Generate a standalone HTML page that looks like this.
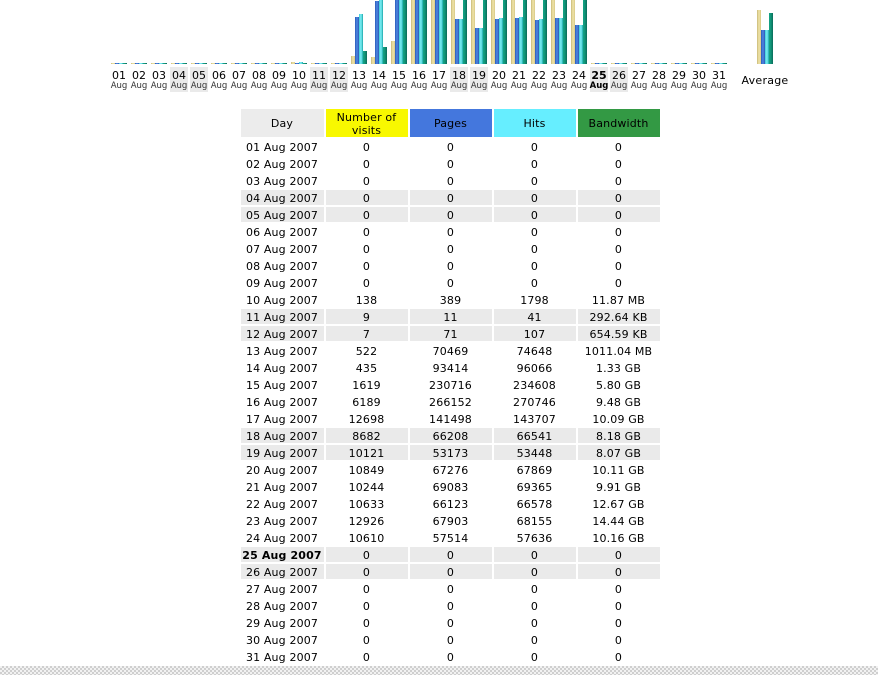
<!DOCTYPE html>
<html><head><meta charset="utf-8"><title>Days of month</title>
<style>
html,body{margin:0;padding:0;background:#fff;width:878px;height:675px;overflow:hidden}
body{font-family:"DejaVu Sans","Liberation Sans",sans-serif;color:#000;position:relative}
.y,.b,.c,.g{position:absolute;width:4px;bottom:0}
.y{background:linear-gradient(90deg,#c9b978,#f0e4a8 50%,#d8c987)}
.b{background:linear-gradient(90deg,#2a5cb8,#4f86e4 50%,#2a58b0)}
.c{background:linear-gradient(90deg,#3ecbd8,#7ef0f6 50%,#18a5a8)}
.g{background:linear-gradient(90deg,#16a585,#0f9276 50%,#0b6a58)}
#chart{position:absolute;left:0;top:0;width:878px;height:64px;overflow:hidden}
.d{position:absolute;top:0;height:64px;width:16px}
.l{position:absolute;top:67px;width:18px;height:25px;text-align:center;font-size:11px;line-height:18px;white-space:nowrap;color:#000}
.l small{display:block;font-size:8.5px;line-height:9px;margin-top:-3px;color:#333;margin-left:-2px;margin-right:-2px}
.l.w{background:#eaeaea}
.l.t{font-weight:bold}
.l.t small{font-weight:bold;color:#000}
#avg{position:absolute;left:730px;top:74px;width:70px;text-align:center;font-size:11px;line-height:14px;letter-spacing:.25px}
table{position:absolute;left:239px;top:107px;border-collapse:separate;border-spacing:2px;table-layout:fixed;width:423px;font-size:11px;letter-spacing:.15px}
th,td{text-align:center;font-weight:normal;white-space:nowrap;overflow:visible;line-height:12px}
th{padding:1px 1px 0 0;height:27px;color:#000;line-height:13px}
td{padding:3px 1px 0 0;height:12px}
tr.w td{background:#eaeaea}
#foot{position:absolute;left:0;top:666px;width:878px;height:9px;background-color:#f2f2f2;background-image:conic-gradient(#cfcfcf 25%,#f2f2f2 0 50%,#cfcfcf 0 75%,#f2f2f2 0);background-size:4px 4px}
</style></head><body>
<div id="chart">
<div class="d" style="left:111px"><i class="y" style="left:0;height:1px"></i><i class="b" style="left:4px;height:1px"></i><i class="c" style="left:8px;height:1px"></i><i class="g" style="left:12px;height:1px"></i></div>
<div class="d" style="left:131px"><i class="y" style="left:0;height:1px"></i><i class="b" style="left:4px;height:1px"></i><i class="c" style="left:8px;height:1px"></i><i class="g" style="left:12px;height:1px"></i></div>
<div class="d" style="left:151px"><i class="y" style="left:0;height:1px"></i><i class="b" style="left:4px;height:1px"></i><i class="c" style="left:8px;height:1px"></i><i class="g" style="left:12px;height:1px"></i></div>
<div class="d" style="left:171px"><i class="y" style="left:0;height:1px"></i><i class="b" style="left:4px;height:1px"></i><i class="c" style="left:8px;height:1px"></i><i class="g" style="left:12px;height:1px"></i></div>
<div class="d" style="left:191px"><i class="y" style="left:0;height:1px"></i><i class="b" style="left:4px;height:1px"></i><i class="c" style="left:8px;height:1px"></i><i class="g" style="left:12px;height:1px"></i></div>
<div class="d" style="left:211px"><i class="y" style="left:0;height:1px"></i><i class="b" style="left:4px;height:1px"></i><i class="c" style="left:8px;height:1px"></i><i class="g" style="left:12px;height:1px"></i></div>
<div class="d" style="left:231px"><i class="y" style="left:0;height:1px"></i><i class="b" style="left:4px;height:1px"></i><i class="c" style="left:8px;height:1px"></i><i class="g" style="left:12px;height:1px"></i></div>
<div class="d" style="left:251px"><i class="y" style="left:0;height:1px"></i><i class="b" style="left:4px;height:1px"></i><i class="c" style="left:8px;height:1px"></i><i class="g" style="left:12px;height:1px"></i></div>
<div class="d" style="left:271px"><i class="y" style="left:0;height:1px"></i><i class="b" style="left:4px;height:1px"></i><i class="c" style="left:8px;height:1px"></i><i class="g" style="left:12px;height:1px"></i></div>
<div class="d" style="left:291px"><i class="y" style="left:0;height:2px"></i><i class="b" style="left:4px;height:1px"></i><i class="c" style="left:8px;height:2px"></i><i class="g" style="left:12px;height:1px"></i></div>
<div class="d" style="left:311px"><i class="y" style="left:0;height:1px"></i><i class="b" style="left:4px;height:1px"></i><i class="c" style="left:8px;height:1px"></i><i class="g" style="left:12px;height:1px"></i></div>
<div class="d" style="left:331px"><i class="y" style="left:0;height:1px"></i><i class="b" style="left:4px;height:1px"></i><i class="c" style="left:8px;height:1px"></i><i class="g" style="left:12px;height:1px"></i></div>
<div class="d" style="left:351px"><i class="y" style="left:0;height:8px"></i><i class="b" style="left:4px;height:47px"></i><i class="c" style="left:8px;height:50px"></i><i class="g" style="left:12px;height:13px"></i></div>
<div class="d" style="left:371px"><i class="y" style="left:0;height:7px"></i><i class="b" style="left:4px;height:63px"></i><i class="c" style="left:8px;height:64px"></i><i class="g" style="left:12px;height:17px"></i></div>
<div class="d" style="left:391px"><i class="y" style="left:0;height:23px"></i><i class="b" style="left:4px;height:64px"></i><i class="c" style="left:8px;height:64px"></i><i class="g" style="left:12px;height:64px"></i></div>
<div class="d" style="left:411px"><i class="y" style="left:0;height:64px"></i><i class="b" style="left:4px;height:64px"></i><i class="c" style="left:8px;height:64px"></i><i class="g" style="left:12px;height:64px"></i></div>
<div class="d" style="left:431px"><i class="y" style="left:0;height:64px"></i><i class="b" style="left:4px;height:64px"></i><i class="c" style="left:8px;height:64px"></i><i class="g" style="left:12px;height:64px"></i></div>
<div class="d" style="left:451px"><i class="y" style="left:0;height:64px"></i><i class="b" style="left:4px;height:45px"></i><i class="c" style="left:8px;height:45px"></i><i class="g" style="left:12px;height:64px"></i></div>
<div class="d" style="left:471px"><i class="y" style="left:0;height:64px"></i><i class="b" style="left:4px;height:36px"></i><i class="c" style="left:8px;height:36px"></i><i class="g" style="left:12px;height:64px"></i></div>
<div class="d" style="left:491px"><i class="y" style="left:0;height:64px"></i><i class="b" style="left:4px;height:45px"></i><i class="c" style="left:8px;height:46px"></i><i class="g" style="left:12px;height:64px"></i></div>
<div class="d" style="left:511px"><i class="y" style="left:0;height:64px"></i><i class="b" style="left:4px;height:46px"></i><i class="c" style="left:8px;height:47px"></i><i class="g" style="left:12px;height:64px"></i></div>
<div class="d" style="left:531px"><i class="y" style="left:0;height:64px"></i><i class="b" style="left:4px;height:44px"></i><i class="c" style="left:8px;height:45px"></i><i class="g" style="left:12px;height:64px"></i></div>
<div class="d" style="left:551px"><i class="y" style="left:0;height:64px"></i><i class="b" style="left:4px;height:46px"></i><i class="c" style="left:8px;height:46px"></i><i class="g" style="left:12px;height:64px"></i></div>
<div class="d" style="left:571px"><i class="y" style="left:0;height:64px"></i><i class="b" style="left:4px;height:39px"></i><i class="c" style="left:8px;height:39px"></i><i class="g" style="left:12px;height:64px"></i></div>
<div class="d" style="left:591px"><i class="y" style="left:0;height:1px"></i><i class="b" style="left:4px;height:1px"></i><i class="c" style="left:8px;height:1px"></i><i class="g" style="left:12px;height:1px"></i></div>
<div class="d" style="left:611px"><i class="y" style="left:0;height:1px"></i><i class="b" style="left:4px;height:1px"></i><i class="c" style="left:8px;height:1px"></i><i class="g" style="left:12px;height:1px"></i></div>
<div class="d" style="left:631px"><i class="y" style="left:0;height:1px"></i><i class="b" style="left:4px;height:1px"></i><i class="c" style="left:8px;height:1px"></i><i class="g" style="left:12px;height:1px"></i></div>
<div class="d" style="left:651px"><i class="y" style="left:0;height:1px"></i><i class="b" style="left:4px;height:1px"></i><i class="c" style="left:8px;height:1px"></i><i class="g" style="left:12px;height:1px"></i></div>
<div class="d" style="left:671px"><i class="y" style="left:0;height:1px"></i><i class="b" style="left:4px;height:1px"></i><i class="c" style="left:8px;height:1px"></i><i class="g" style="left:12px;height:1px"></i></div>
<div class="d" style="left:691px"><i class="y" style="left:0;height:1px"></i><i class="b" style="left:4px;height:1px"></i><i class="c" style="left:8px;height:1px"></i><i class="g" style="left:12px;height:1px"></i></div>
<div class="d" style="left:711px"><i class="y" style="left:0;height:1px"></i><i class="b" style="left:4px;height:1px"></i><i class="c" style="left:8px;height:1px"></i><i class="g" style="left:12px;height:1px"></i></div>
<div class="d" style="left:757px"><i class="y" style="left:0;height:54px"></i><i class="b" style="left:4px;height:34px"></i><i class="c" style="left:8px;height:34px"></i><i class="g" style="left:12px;height:51px"></i></div>
</div>
<div class="l" style="left:110px">01<small>Aug</small></div>
<div class="l" style="left:130px">02<small>Aug</small></div>
<div class="l" style="left:150px">03<small>Aug</small></div>
<div class="l w" style="left:170px">04<small>Aug</small></div>
<div class="l w" style="left:190px">05<small>Aug</small></div>
<div class="l" style="left:210px">06<small>Aug</small></div>
<div class="l" style="left:230px">07<small>Aug</small></div>
<div class="l" style="left:250px">08<small>Aug</small></div>
<div class="l" style="left:270px">09<small>Aug</small></div>
<div class="l" style="left:290px">10<small>Aug</small></div>
<div class="l w" style="left:310px">11<small>Aug</small></div>
<div class="l w" style="left:330px">12<small>Aug</small></div>
<div class="l" style="left:350px">13<small>Aug</small></div>
<div class="l" style="left:370px">14<small>Aug</small></div>
<div class="l" style="left:390px">15<small>Aug</small></div>
<div class="l" style="left:410px">16<small>Aug</small></div>
<div class="l" style="left:430px">17<small>Aug</small></div>
<div class="l w" style="left:450px">18<small>Aug</small></div>
<div class="l w" style="left:470px">19<small>Aug</small></div>
<div class="l" style="left:490px">20<small>Aug</small></div>
<div class="l" style="left:510px">21<small>Aug</small></div>
<div class="l" style="left:530px">22<small>Aug</small></div>
<div class="l" style="left:550px">23<small>Aug</small></div>
<div class="l" style="left:570px">24<small>Aug</small></div>
<div class="l w t" style="left:590px">25<small>Aug</small></div>
<div class="l w" style="left:610px">26<small>Aug</small></div>
<div class="l" style="left:630px">27<small>Aug</small></div>
<div class="l" style="left:650px">28<small>Aug</small></div>
<div class="l" style="left:670px">29<small>Aug</small></div>
<div class="l" style="left:690px">30<small>Aug</small></div>
<div class="l" style="left:710px">31<small>Aug</small></div>
<div id="avg">Average</div>
<table>
<colgroup><col style="width:83px"><col style="width:82px"><col style="width:82px"><col style="width:82px"><col style="width:82px"></colgroup>
<tr><th style="background:#ececec">Day</th><th style="background:#f8f800">Number of<br>visits</th><th style="background:#4477dd">Pages</th><th style="background:#66eeff">Hits</th><th style="background:#339944">Bandwidth</th></tr>
<tr><td>01 Aug 2007</td><td>0</td><td>0</td><td>0</td><td>0</td></tr>
<tr><td>02 Aug 2007</td><td>0</td><td>0</td><td>0</td><td>0</td></tr>
<tr><td>03 Aug 2007</td><td>0</td><td>0</td><td>0</td><td>0</td></tr>
<tr class="w"><td>04 Aug 2007</td><td>0</td><td>0</td><td>0</td><td>0</td></tr>
<tr class="w"><td>05 Aug 2007</td><td>0</td><td>0</td><td>0</td><td>0</td></tr>
<tr><td>06 Aug 2007</td><td>0</td><td>0</td><td>0</td><td>0</td></tr>
<tr><td>07 Aug 2007</td><td>0</td><td>0</td><td>0</td><td>0</td></tr>
<tr><td>08 Aug 2007</td><td>0</td><td>0</td><td>0</td><td>0</td></tr>
<tr><td>09 Aug 2007</td><td>0</td><td>0</td><td>0</td><td>0</td></tr>
<tr><td>10 Aug 2007</td><td>138</td><td>389</td><td>1798</td><td>11.87 MB</td></tr>
<tr class="w"><td>11 Aug 2007</td><td>9</td><td>11</td><td>41</td><td>292.64 KB</td></tr>
<tr class="w"><td>12 Aug 2007</td><td>7</td><td>71</td><td>107</td><td>654.59 KB</td></tr>
<tr><td>13 Aug 2007</td><td>522</td><td>70469</td><td>74648</td><td>1011.04 MB</td></tr>
<tr><td>14 Aug 2007</td><td>435</td><td>93414</td><td>96066</td><td>1.33 GB</td></tr>
<tr><td>15 Aug 2007</td><td>1619</td><td>230716</td><td>234608</td><td>5.80 GB</td></tr>
<tr><td>16 Aug 2007</td><td>6189</td><td>266152</td><td>270746</td><td>9.48 GB</td></tr>
<tr><td>17 Aug 2007</td><td>12698</td><td>141498</td><td>143707</td><td>10.09 GB</td></tr>
<tr class="w"><td>18 Aug 2007</td><td>8682</td><td>66208</td><td>66541</td><td>8.18 GB</td></tr>
<tr class="w"><td>19 Aug 2007</td><td>10121</td><td>53173</td><td>53448</td><td>8.07 GB</td></tr>
<tr><td>20 Aug 2007</td><td>10849</td><td>67276</td><td>67869</td><td>10.11 GB</td></tr>
<tr><td>21 Aug 2007</td><td>10244</td><td>69083</td><td>69365</td><td>9.91 GB</td></tr>
<tr><td>22 Aug 2007</td><td>10633</td><td>66123</td><td>66578</td><td>12.67 GB</td></tr>
<tr><td>23 Aug 2007</td><td>12926</td><td>67903</td><td>68155</td><td>14.44 GB</td></tr>
<tr><td>24 Aug 2007</td><td>10610</td><td>57514</td><td>57636</td><td>10.16 GB</td></tr>
<tr class="w"><td><b>25 Aug 2007</b></td><td>0</td><td>0</td><td>0</td><td>0</td></tr>
<tr class="w"><td>26 Aug 2007</td><td>0</td><td>0</td><td>0</td><td>0</td></tr>
<tr><td>27 Aug 2007</td><td>0</td><td>0</td><td>0</td><td>0</td></tr>
<tr><td>28 Aug 2007</td><td>0</td><td>0</td><td>0</td><td>0</td></tr>
<tr><td>29 Aug 2007</td><td>0</td><td>0</td><td>0</td><td>0</td></tr>
<tr><td>30 Aug 2007</td><td>0</td><td>0</td><td>0</td><td>0</td></tr>
<tr><td>31 Aug 2007</td><td>0</td><td>0</td><td>0</td><td>0</td></tr>
</table>
<div id="foot"></div>
</body></html>
